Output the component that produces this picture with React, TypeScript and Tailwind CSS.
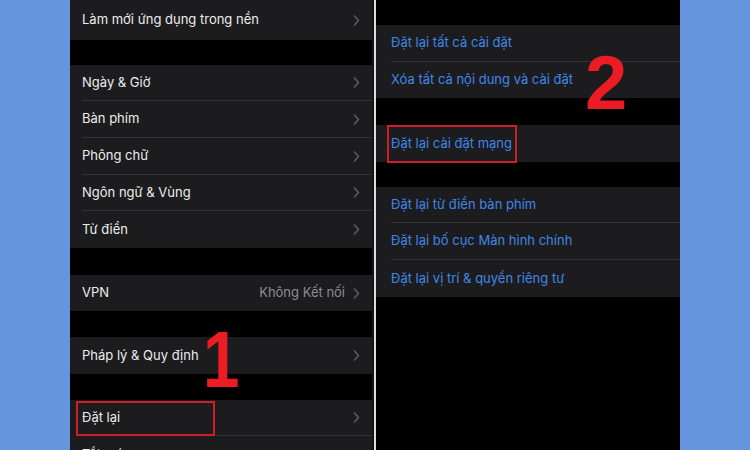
import type { ReactNode } from "react";

const font = { fontFamily: "Inter, 'Noto Sans', sans-serif" };

function Chevron() {
  return (
    <svg width="7" height="11" viewBox="0 0 7 11" className="shrink-0" aria-hidden>
      <polyline points="1.5,1 5.5,5.5 1.5,10" fill="none" stroke="#5b5b60" strokeWidth="1.6" strokeLinecap="round" strokeLinejoin="round" />
    </svg>
  );
}

function Row({
  h,
  children,
  value,
  last,
  chevron = true,
  blue,
  box,
  inset = "w-3",
}: {
  h: string;
  children: ReactNode;
  value?: string;
  last?: boolean;
  chevron?: boolean;
  blue?: boolean;
  box?: string;
  inset?: string;
}) {
  return (
    <div className={`relative flex shrink-0 bg-[#1c1c1e] ${h}`}>
      <div className={`shrink-0 ${inset}`} />
      <div className={`flex flex-1 items-center pr-3 ${last ? "" : "border-b border-[#333336]"}`}>
        <span className={`flex-1 text-[13px] ${blue ? "text-[#4087e8]" : "text-[#ececec]"}`}>{children}</span>
        {value && <span className="mr-2 text-[13px] text-[#8c8c91]">{value}</span>}
        {chevron && <Chevron />}
      </div>
      {box && <div className={`absolute border-2 border-[#cf1f26] ${box}`} />}
    </div>
  );
}

function Gap({ h }: { h: string }) {
  return <div className={`shrink-0 bg-black ${h}`} />;
}

function LeftPhone() {
  return (
    <div className="relative flex h-full w-[302px] shrink-0 flex-col overflow-hidden bg-black">
      <Row h="h-[40px]" last>Làm mới ứng dụng trong nền</Row>
      <Gap h="h-[25px]" />
      <Row h="h-[36px]">Ngày &amp; Giờ</Row>
      <Row h="h-[37px]">Bàn phím</Row>
      <Row h="h-[37px]">Phông chữ</Row>
      <Row h="h-[36px]">Ngôn ngữ &amp; Vùng</Row>
      <Row h="h-[37px]" last>Từ điển</Row>
      <Gap h="h-[27px]" />
      <Row h="h-[36px]" value="Không Kết nối" last>VPN</Row>
      <Gap h="h-[26px]" />
      <Row h="h-[37px]" last>Pháp lý &amp; Quy định</Row>
      <Gap h="h-[26px]" />
      <Row h="h-[36px]" box="left-[6px] top-[1px] h-[35px] w-[139px]">Đặt lại</Row>
      <div className="flex h-[37px] shrink-0 items-start bg-[#1c1c1e] pl-3 pt-[9px]">
        <span className="text-[13px] text-[#ececec]">Tắt máy</span>
      </div>
      <span
        className="absolute left-[133px] top-[320px] origin-left scale-x-[0.82] text-[80px] font-bold leading-none text-[#ec1c24]"
        style={{ fontFamily: "'Liberation Sans', Arial, sans-serif" }}
      >
        1
      </span>
    </div>
  );
}

function RightPhone() {
  return (
    <div className="relative flex h-full w-[304px] shrink-0 flex-col overflow-hidden bg-black">
      <Gap h="h-[25px]" />
      <Row h="h-[37px]" inset="w-[15px]" blue chevron={false}>Đặt lại tất cả cài đặt</Row>
      <Row h="h-[36px]" inset="w-[15px]" blue chevron={false} last>Xóa tất cả nội dung và cài đặt</Row>
      <Gap h="h-[27px]" />
      <Row h="h-[37px]" inset="w-[15px]" blue chevron={false} last box="left-[11px] top-0 h-[38px] w-[130px]">
        Đặt lại cài đặt mạng
      </Row>
      <Gap h="h-[25px]" />
      <Row h="h-[36px]" inset="w-[15px]" blue chevron={false}>Đặt lại từ điển bàn phím</Row>
      <Row h="h-[37px]" inset="w-[15px]" blue chevron={false}>Đặt lại bố cục Màn hình chính</Row>
      <Row h="h-[37px]" inset="w-[15px]" blue chevron={false} last>Đặt lại vị trí &amp; quyền riêng tư</Row>
      <span
        className="absolute left-[209px] top-[45px] text-[76px] font-bold leading-none text-[#ec1c24]"
        style={{ fontFamily: "'Liberation Sans', Arial, sans-serif" }}
      >
        2
      </span>
    </div>
  );
}

export default function App() {
  return (
    <div className="flex h-[450px] w-[750px] overflow-hidden bg-[#6495dd]" style={font}>
      <div className="w-[70px] shrink-0" />
      <LeftPhone />
      <div className="w-[2px] shrink-0 bg-[#151515]" />
      <div className="w-[2px] shrink-0 bg-[#dcdcdc]" />
      <RightPhone />
    </div>
  );
}
